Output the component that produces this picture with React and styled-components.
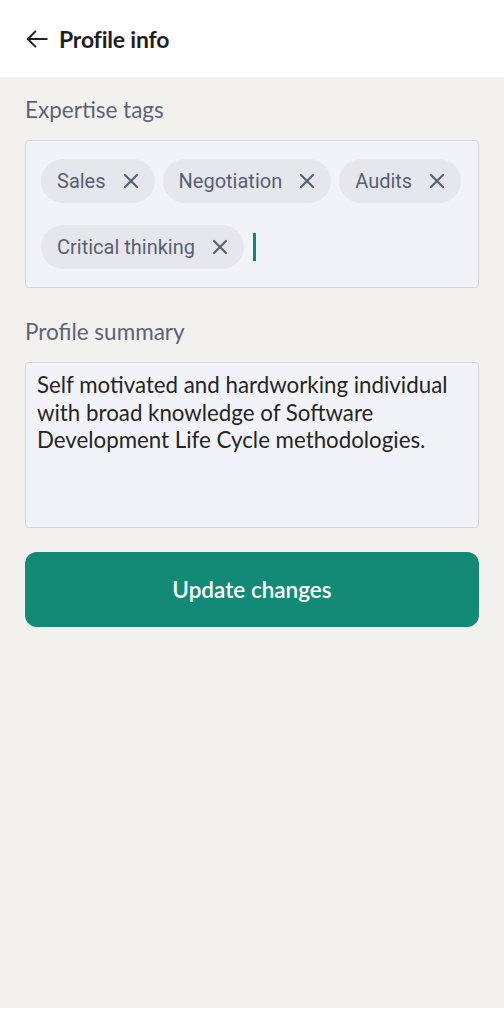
import React, { useState } from "react";
import styled, { createGlobalStyle } from "styled-components";

const GlobalStyle = createGlobalStyle`
  html, body {
    margin: 0;
    padding: 0;
    background: #ffffff;
  }
  * {
    box-sizing: border-box;
  }
`;

const Screen = styled.div`
  width: 504px;
  height: 1024px;
  display: flex;
  flex-direction: column;
  background: #ffffff;
  font-family: Lato, "Noto Sans", sans-serif;
`;

const Header = styled.header`
  height: 77px;
  display: flex;
  align-items: center;
  gap: 9px;
  padding: 0 24px;
  background: #ffffff;
`;

const BackButton = styled.button`
  border: none;
  background: transparent;
  padding: 0;
  display: flex;
  align-items: center;
  color: #222222;
  cursor: pointer;
`;

const Title = styled.h1`
  margin: 0;
  font-size: 23px;
  font-weight: 700;
  color: #1f1f1f;
  letter-spacing: -0.2px;
`;

const Body = styled.main`
  height: 931px;
  background: #f3f1ed;
  padding: 19px 25px 0;
  display: flex;
  flex-direction: column;
`;

const Label = styled.div`
  font-size: 22.5px;
  color: #5a6379;
  line-height: 28px;
  margin-bottom: ${(p) => p.gap || 16}px;
`;

const TagBox = styled.div`
  display: flex;
  flex-wrap: wrap;
  align-items: center;
  column-gap: 8px;
  row-gap: 22px;
  padding: 18px 15px;
  min-height: 148px;
  background: #f2f3f8;
  border: 1.5px solid #d6d8df;
  border-radius: 4px;
  margin-bottom: 30px;
`;

const Chip = styled.div`
  height: 44px;
  display: flex;
  align-items: center;
  gap: 17px;
  padding: 0 16px;
  border-radius: 22px;
  background: #e5e7ed;
  font-family: Roboto, "Noto Sans", sans-serif;
  font-size: 20px;
  color: #585f73;
`;

const RemoveButton = styled.button`
  border: none;
  background: transparent;
  padding: 0;
  display: flex;
  color: #5b6174;
  cursor: pointer;
`;

const Caret = styled.span`
  width: 3px;
  height: 28px;
  margin-left: 1px;
  background: #13876f;
`;

const Summary = styled.textarea`
  height: 166px;
  width: 100%;
  resize: none;
  padding: 8px 11px;
  background: #f2f3f8;
  border: 1.5px solid #d6d8df;
  border-radius: 4px;
  font-family: Lato, "Noto Sans", sans-serif;
  font-size: 22.3px;
  line-height: 27.5px;
  color: #252525;
  outline: none;
  margin-bottom: 24px;
`;

const SubmitButton = styled.button`
  height: 75px;
  width: 100%;
  border: none;
  border-radius: 12px;
  background: #138a76;
  color: #ffffff;
  font-family: Lato, "Noto Sans", sans-serif;
  font-size: 22.5px;
  font-weight: 600;
  cursor: pointer;
`;

const Footer = styled.div`
  height: 16px;
  background: #ffffff;
`;

const ArrowLeft = () => (
  <svg width="26" height="26" viewBox="0 0 24 24" fill="none" stroke="currentColor" strokeWidth="1.8" strokeLinecap="round" strokeLinejoin="round">
    <path d="M21 12H3.5" />
    <path d="M10.5 5L3.5 12l7 7" />
  </svg>
);

const Cross = () => (
  <svg width="16" height="16" viewBox="0 0 16 16" fill="none" stroke="currentColor" strokeWidth="2.2" strokeLinecap="round">
    <path d="M2 2l12 12M14 2L2 14" />
  </svg>
);

const initialTags = ["Sales", "Negotiation", "Audits", "Critical thinking"];

const App = () => {
  const [tags, setTags] = useState(initialTags);
  const [summary, setSummary] = useState(
    "Self motivated and hardworking individual with broad knowledge of Software Development Life Cycle methodologies."
  );

  const removeTag = (tag) => {
    setTags(tags.filter((t) => t !== tag));
  };

  return (
    <>
      <GlobalStyle />
      <Screen>
        <Header>
          <BackButton aria-label="Back">
            <ArrowLeft />
          </BackButton>
          <Title>Profile info</Title>
        </Header>
        <Body>
          <Label>Expertise tags</Label>
          <TagBox>
            {tags.map((tag) => (
              <Chip key={tag}>
                {tag}
                <RemoveButton aria-label={`Remove ${tag}`} onClick={() => removeTag(tag)}>
                  <Cross />
                </RemoveButton>
              </Chip>
            ))}
            <Caret />
          </TagBox>
          <Label gap={16}>Profile summary</Label>
          <Summary value={summary} onChange={(e) => setSummary(e.target.value)} />
          <SubmitButton>Update changes</SubmitButton>
        </Body>
        <Footer />
      </Screen>
    </>
  );
};

export default App;
